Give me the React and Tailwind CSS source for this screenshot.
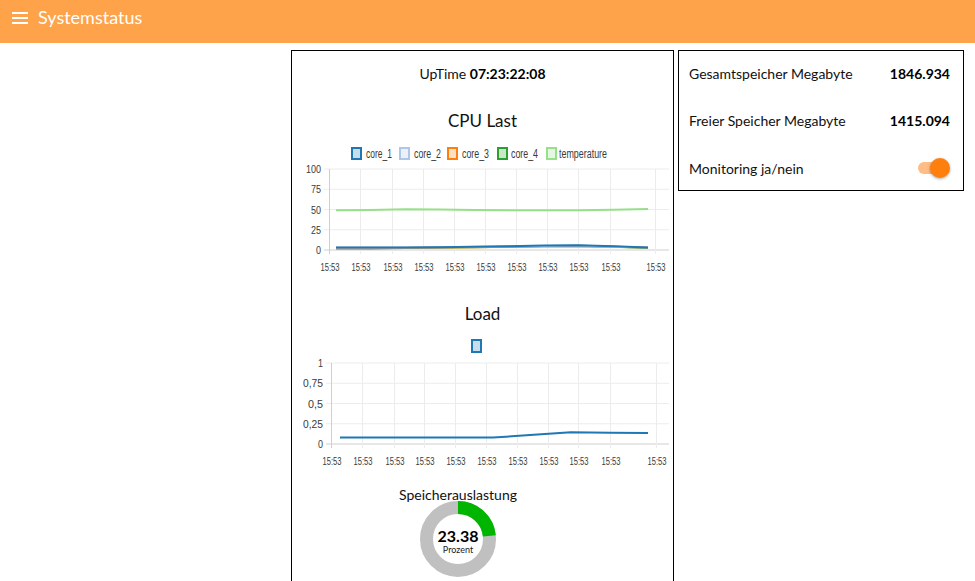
import React from 'react'

const CHART_FONT = '"Liberation Sans", Arial, sans-serif'

const cpuCols = [329, 360, 392, 423, 454, 485, 516, 547, 578, 610, 655]
const loadCols = [331, 362, 394, 424, 455, 486, 517, 548, 578, 610, 656]

const cpuLegend = [
  { name: 'core_1', color: '#1f77b4', box: 351, text: 366, w: 26 },
  { name: 'core_2', color: '#aec7e8', box: 399, text: 414, w: 27 },
  { name: 'core_3', color: '#ff7f0e', box: 447, text: 462, w: 27 },
  { name: 'core_4', color: '#2ca02c', box: 497, text: 511, w: 27 },
  { name: 'temperature', color: '#98df8a', box: 546, text: 559, w: 48 },
]

const spread = (vals, x0, x1) => vals.map((v, i) => [x0 + ((x1 - x0) * i) / (vals.length - 1), v])

const cpuSeries = [
  { color: '#2ca02c', pts: spread([2, 2, 2.5, 3, 3.5, 4, 4.5, 5, 4, 2.5], 336, 648) },
  { color: '#ff7f0e', pts: spread([2.5, 2.5, 2.5, 3, 3.5, 4, 4.5, 4.5, 4, 3], 336, 648) },
  { color: '#aec7e8', pts: spread([3, 3, 3, 3.5, 4, 4.5, 5, 5.5, 4, 3], 336, 648) },
  { color: '#1f77b4', pts: spread([3, 3, 3, 3.5, 4, 4.5, 5.5, 6, 4.5, 3], 336, 648) },
  { color: '#98df8a', pts: spread([49, 49.5, 50.3, 50, 49.5, 49, 49, 49.2, 49.6, 50.6], 336, 648) },
]

const loadPts = [
  [340, 0.08], [374, 0.08], [408, 0.08], [442, 0.08], [493, 0.08], [530, 0.11], [571, 0.145], [610, 0.14], [648, 0.135],
]

function Grid({ cols, yTop, yBottom, labels, labelX, xLabelY, axisLeft }) {
  const rows = labels.length
  return (
    <g fontFamily={CHART_FONT} fontSize="11" fill="#3a3a3a">
      {labels.map((l, i) => {
        const y = yTop + ((yBottom - yTop) * i) / (rows - 1)
        return (
          <g key={l}>
            <line x1={axisLeft - 5} x2={669} y1={y} y2={y} stroke={i === rows - 1 ? '#cfcfcf' : '#ececec'} strokeWidth="1" />
            <text x={labelX} y={y + 4} textAnchor="end" textLength={l.length * 5} lengthAdjust="spacingAndGlyphs">
              {l}
            </text>
          </g>
        )
      })}
      {cols.map((x, i) => (
        <g key={i}>
          <line x1={x + 0.5} x2={x + 0.5} y1={yTop} y2={yBottom + 4} stroke={i === 0 ? '#cfcfcf' : '#ececec'} strokeWidth="1" />
          <text x={x + 1} y={xLabelY + 4} textAnchor="middle" textLength="19" lengthAdjust="spacingAndGlyphs">
            15:53
          </text>
        </g>
      ))}
    </g>
  )
}

function CpuChart() {
  const y = (v) => 250 - v * 0.81
  return (
    <svg width="381" height="143" viewBox="292 147 381 143" overflow="visible" className="block">
      {cpuLegend.map((l) => (
        <g key={l.name}>
          <rect x={l.box + 1} y={148} width="9" height="11" fill={l.color} fillOpacity="0.25" stroke={l.color} strokeWidth="2" />
          <text
            x={l.text}
            y={157.5}
            fontFamily={CHART_FONT}
            fontSize="12"
            fill="#3a3a3a"
            textLength={l.w}
            lengthAdjust="spacingAndGlyphs"
          >
            {l.name}
          </text>
        </g>
      ))}
      <Grid cols={cpuCols} yTop={169} yBottom={250} labels={['100', '75', '50', '25', '0']} labelX={321} xLabelY={267} axisLeft={329} />
      {cpuSeries.map((s, i) => (
        <polyline
          key={i}
          points={s.pts.map(([x, v]) => `${x},${y(v)}`).join(' ')}
          fill="none"
          stroke={s.color}
          strokeWidth="2"
          strokeLinejoin="round"
        />
      ))}
    </svg>
  )
}

function LoadChart() {
  const y = (v) => 444 - v * 81
  return (
    <svg width="381" height="142" viewBox="292 338 381 142" overflow="visible" className="block">
      <rect x={472} y={340} width="9" height="12" fill="#1f77b4" fillOpacity="0.25" stroke="#1f77b4" strokeWidth="2" />
      <Grid cols={loadCols} yTop={363} yBottom={444} labels={['1', '0,75', '0,5', '0,25', '0']} labelX={323} xLabelY={461} axisLeft={331} />
      <polyline
        points={loadPts.map(([x, v]) => `${x},${y(v)}`).join(' ')}
        fill="none"
        stroke="#1f77b4"
        strokeWidth="2"
        strokeLinejoin="round"
      />
    </svg>
  )
}

function Gauge({ value }) {
  const r = 31.5
  const c = 2 * Math.PI * r
  return (
    <div className="w-[332px] flex flex-col items-center">
      <div className="h-[21px] pt-[7px] leading-[16px] text-[14px] text-[#111]">Speicherauslastung</div>
      <div className="relative w-[80px] h-[80px]">
        <svg width="80" height="80" viewBox="418 501 80 80" className="block">
          <circle cx="458" cy="539" r={r} fill="none" stroke="#c0c0c0" strokeWidth="13" />
          <circle
            cx="458"
            cy="539"
            r={r}
            fill="none"
            stroke="#00b500"
            strokeWidth="13"
            strokeDasharray={`${(c * value) / 100} ${c}`}
            transform="rotate(-90 458 539)"
          />
        </svg>
        <div className="absolute left-0 right-0 top-[26px] flex flex-col items-center">
          <span className="text-[16px] leading-[18px] font-bold text-black">{value}</span>
          <span className="text-[9px] leading-[10px] text-[#222]">Prozent</span>
        </div>
      </div>
    </div>
  )
}

export default function App() {
  return (
    <div className="h-[581px] overflow-hidden bg-white" style={{ fontFamily: 'Lato, "Open Sans", sans-serif' }}>
      <header className="h-[43px] bg-[#fea349] flex items-start">
        <div className="h-[35px] flex items-center pl-[12px] gap-[10px]">
          <div className="w-[16px] flex flex-col gap-[3px]">
            <span className="h-[2px] bg-white block" />
            <span className="h-[2px] bg-white block" />
            <span className="h-[2px] bg-white block" />
          </div>
          <span className="text-white text-[18px]">Systemstatus</span>
        </div>
      </header>

      <main className="flex items-start gap-[4px] pl-[291px] pt-[7px]">
        <section className="w-[383px] border border-black flex flex-col pb-[30px]">
          <div className="h-[44px] flex items-center justify-center text-[14px] text-[#111]">
            UpTime&nbsp;<b className="text-black">07:23:22:08</b>
          </div>
          <div className="h-[52px] flex items-center justify-center text-[17px] text-[#111]">CPU Last</div>
          <CpuChart />
          <div className="h-[48px] flex items-center justify-center text-[17px] text-[#111]">Load</div>
          <LoadChart />
          <Gauge value="23.38" />
        </section>

        <section className="w-[286px] h-[141px] border border-black grid grid-rows-[44px_51px_44px] text-[14px] text-[#111]">
          <div className="flex items-center justify-between pl-[10px] pr-[13px]">
            <span>Gesamtspeicher Megabyte</span>
            <b className="text-black">1846.934</b>
          </div>
          <div className="flex items-center justify-between pl-[10px] pr-[13px]">
            <span>Freier Speicher Megabyte</span>
            <b className="text-black">1415.094</b>
          </div>
          <div className="flex items-center justify-between pl-[10px] pr-[13px]">
            <span>Monitoring ja/nein</span>
            <div className="w-[32px] h-[20px] flex items-center">
              <div className="relative w-[24px] h-[12px] rounded-full bg-[#ffbd85]">
                <span className="absolute left-[12px] top-[-4px] w-[20px] h-[20px] rounded-full bg-[#ff7f0e] shadow-[0_1px_3px_rgba(0,0,0,0.35)]" />
              </div>
            </div>
          </div>
        </section>
      </main>
    </div>
  )
}
